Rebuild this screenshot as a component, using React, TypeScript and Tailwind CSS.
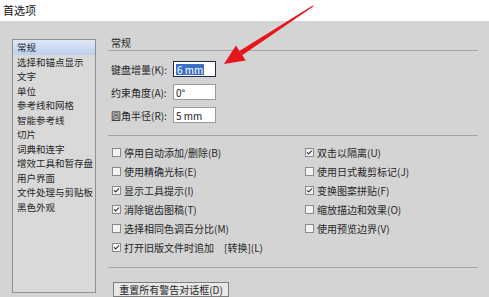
import { Check } from 'lucide-react';

const categories = [
  '常规',
  '选择和锚点显示',
  '文字',
  '单位',
  '参考线和网格',
  '智能参考线',
  '切片',
  '词典和连字',
  '增效工具和暂存盘',
  '用户界面',
  '文件处理与剪贴板',
  '黑色外观',
];

const leftOptions = [
  { label: '停用自动添加/删除(B)', checked: false },
  { label: '使用精确光标(E)', checked: false },
  { label: '显示工具提示(I)', checked: true },
  { label: '消除锯齿图稿(T)', checked: true },
  { label: '选择相同色调百分比(M)', checked: false },
];

const rightOptions = [
  { label: '双击以隔离(U)', checked: true },
  { label: '使用日式裁剪标记(J)', checked: false },
  { label: '变换图案拼贴(F)', checked: true },
  { label: '缩放描边和效果(O)', checked: false },
  { label: '使用预览边界(V)', checked: false },
];

function Checkbox({ label, checked }: { label: string; checked: boolean }) {
  return (
    <div className="flex items-center h-[19px] gap-[3px] whitespace-nowrap">
      <span className="w-[9px] h-[9px] border border-[#8a8a8a] bg-[#f2f2f2] flex items-center justify-center">
        {checked && <Check className="w-[9px] h-[9px] text-[#222]" strokeWidth={3.5} />}
      </span>
      <span>{label}</span>
    </div>
  );
}

function Field({ label, value, active }: { label: string; value: string; active?: boolean }) {
  return (
    <div className="flex items-center h-[16px]">
      <span className="w-[62px] whitespace-nowrap">{label}</span>
      <div
        className={`w-[43px] h-[16px] bg-white border flex items-center px-[2px] ${
          active ? 'border-[#1e2a4a]' : 'border-[#9a9a9a]'
        }`}
      >
        {active ? (
          <span className="bg-[#3a6fc6] text-white leading-[11px] px-[1px]">{value}</span>
        ) : (
          <span>{value}</span>
        )}
      </div>
    </div>
  );
}

export default function App() {
  return (
    <div
      className="relative w-[489px] h-[297px] flex flex-col overflow-hidden text-[10px] text-[#262626]"
      style={{ fontFamily: '"Noto Sans CJK SC", "Noto Sans", sans-serif' }}
    >
      <div className="h-[22px] bg-white flex items-center px-[3px] text-[11px] text-[#111]">首选项</div>

      <div className="flex-1 bg-[#d4d4d4] flex pl-[12px] pt-[18px] gap-[12px]">
        <div className="w-[84px] h-[254px] border border-[#8f8f8f] bg-[#d9d9d9] flex flex-col text-[9.5px]">
          {categories.map((c, i) => (
            <div
              key={c}
              className={`h-[14.55px] leading-[14.55px] pl-[4px] whitespace-nowrap ${
                i === 0 ? 'bg-gradient-to-b from-[#dde7f7] to-[#bccfee]' : ''
              }`}
            >
              {c}
            </div>
          ))}
        </div>

        <div className="w-[370px] flex flex-col -mt-[2px]">
          <div className="border-b border-[#a4a4a4] pl-[3px] pb-[1px] leading-[12px]">常规</div>

          <div className="flex flex-col gap-[7px] mt-[10px] pl-[3px]">
            <Field label="键盘增量(K):" value="6 mm" active />
            <Field label="约束角度(A):" value="0°" />
            <Field label="圆角半径(R):" value="5 mm" />
          </div>

          <div className="border-t border-[#a4a4a4] mt-[12px]" />

          <div className="flex mt-[7px] pl-[4px]">
            <div className="w-[193px] flex flex-col">
              {leftOptions.map((o) => (
                <Checkbox key={o.label} {...o} />
              ))}
              <Checkbox label="打开旧版文件时追加　[转换](L)" checked />
            </div>
            <div className="flex flex-col">
              {rightOptions.map((o) => (
                <Checkbox key={o.label} {...o} />
              ))}
            </div>
          </div>

          <div className="border-t border-[#a4a4a4] mt-[10px]" />

          <div className="mt-[14px] pl-[5px]">
            <button className="w-[116px] h-[15px] bg-[#e8e8e8] border border-[#7e7e7e] flex items-center justify-center leading-[12px] whitespace-nowrap">
              重置所有警告对话框(D)
            </button>
          </div>
        </div>
      </div>

      <svg className="absolute inset-0 pointer-events-none" width="489" height="297" viewBox="0 0 489 297">
        <polygon points="224,64 245.7,60.6 235.9,45.6" fill="#e5171c" />
        <polygon points="242.2,55.2 239.4,51 312.7,5.6 313.3,6.4" fill="#e5171c" />
      </svg>
    </div>
  );
}
